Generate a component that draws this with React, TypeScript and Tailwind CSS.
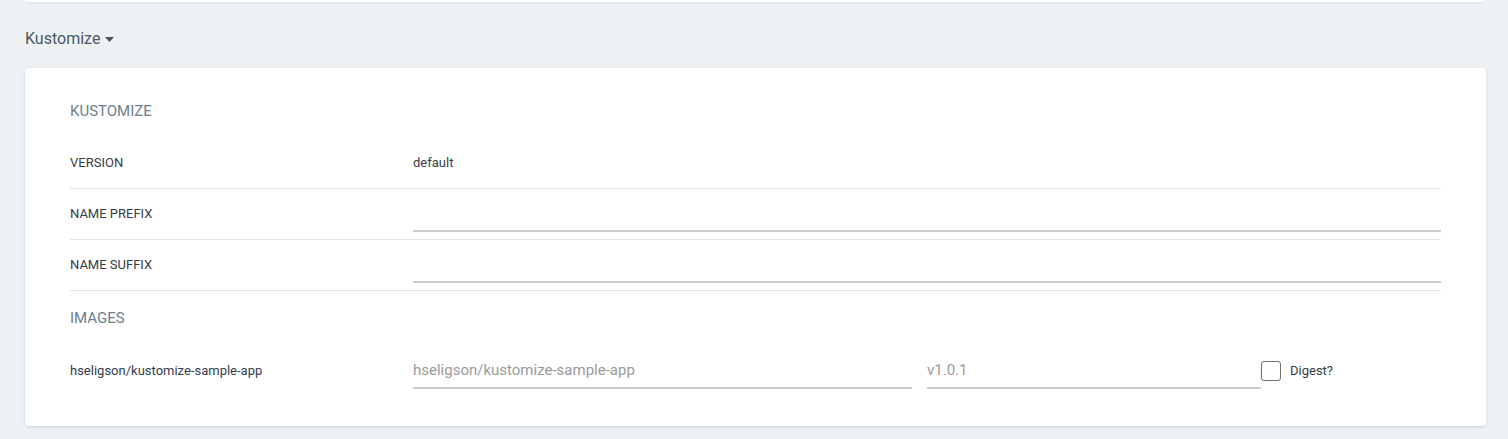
import { useState } from "react";

const ROW =
  "flex h-[51px] items-center border-b border-[#dee6eb] text-[13px] text-[#363c4a]";

function Field({ placeholder, className = "" }: { placeholder?: string; className?: string }) {
  return (
    <input
      placeholder={placeholder}
      className={`h-[35px] border-b-2 border-[#cccccc] bg-transparent text-[15px] text-[#363c4a] outline-none placeholder:text-[#9a9a9a] ${className}`}
    />
  );
}

export default function App() {
  const [digest, setDigest] = useState(false);

  return (
    <div className="min-h-[439px] w-[1508px] bg-[#eef1f4] font-['Roboto',sans-serif]">
      {/* tail of the panel above */}
      <div className="mx-[25px] h-[2px] w-[1460px] rounded-b bg-white shadow-[0_1px_2px_rgba(0,0,0,0.08)]" />

      <div className="flex h-[66px] items-center px-[25px] pt-[8px] text-[16px] text-[#495763]">
        Kustomize
        <svg width="11" height="7" viewBox="0 0 11 7" className="ml-[4px] mt-[1px]">
          <path d="M1 1h9L5.5 6z" fill="#495763" />
        </svg>
      </div>

      <div className="mx-[25px] w-[1461px] rounded bg-white px-[45px] pb-[30px] pt-[31px] shadow-[0_1px_3px_rgba(0,0,0,0.12)]">
        <div className="mb-[15px] flex h-[24px] items-center text-[15px] text-[#6d7f8b]">KUSTOMIZE</div>

        <div className={ROW}>
          <div className="w-[343px]">VERSION</div>
          <div>default</div>
        </div>
        <div className={ROW}>
          <div className="w-[343px]">NAME PREFIX</div>
          <Field className="flex-1" />
        </div>
        <div className={ROW}>
          <div className="w-[343px]">NAME SUFFIX</div>
          <Field className="flex-1" />
        </div>

        <div className="mb-[16px] mt-[15px] flex h-[24px] items-center text-[15px] text-[#6d7f8b]">IMAGES</div>

        <div className="flex h-[50px] items-center text-[13px] text-[#363c4a]">
          <div className="w-[343px]">hseligson/kustomize-sample-app</div>
          <Field placeholder="hseligson/kustomize-sample-app" className="w-[499px]" />
          <Field placeholder="v1.0.1" className="ml-[15px] w-[334px]" />
          <button
            onClick={() => setDigest(!digest)}
            className="h-[20px] w-[20px] rounded-[3px] border-[1.5px] border-[#6f6f6f] bg-white"
          />
          <span className="ml-[9px]">Digest?</span>
        </div>
      </div>
    </div>
  );
}
